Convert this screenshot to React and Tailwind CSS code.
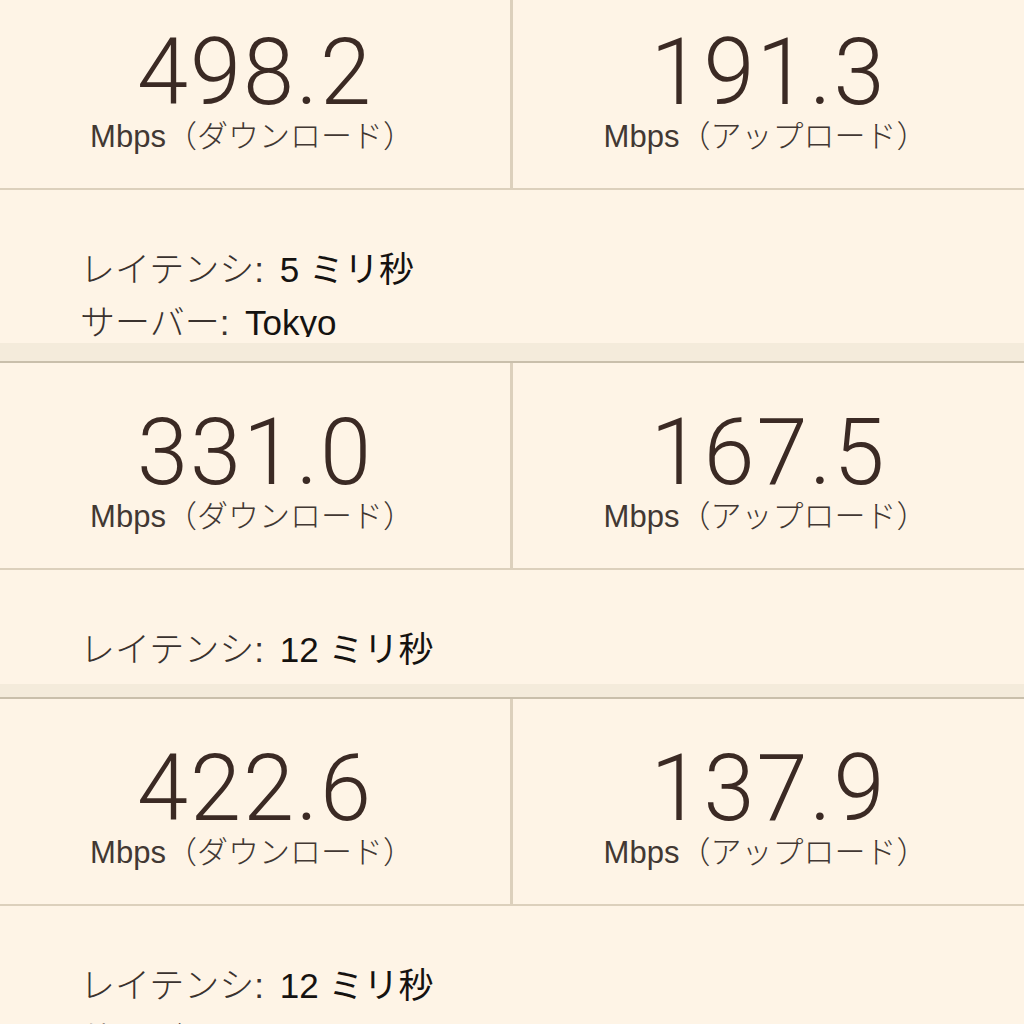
import React from 'react';

const jp = { fontFamily: '"Liberation Sans", "Noto Sans CJK JP", sans-serif' };

const results = [
    {
        down: '498.2',
        up: '191.3',
        lines: [['レイテンシ:', '5 ミリ秒'], ['サーバー:', 'Tokyo']],
        infoH: 'h-[153px]',
        bandH: 'h-[18px]',
        first: true,
    },
    {
        down: '331.0',
        up: '167.5',
        lines: [['レイテンシ:', '12 ミリ秒']],
        infoH: 'h-[114px]',
        bandH: 'h-[13px]',
    },
    {
        down: '422.6',
        up: '137.9',
        lines: [['レイテンシ:', '12 ミリ秒'], ['サーバー:', 'Tokyo']],
        infoH: 'h-[153px]',
        bandH: 'h-[18px]',
    },
];

const SpeedCell = ({ value, label }) => (
    <div className="flex-1 flex flex-col items-center pt-[45px]">
        <div
            className="text-[92px] leading-[90px] h-[90px] font-light tracking-[2px] text-[#3b2a24]"
            style={{ fontFamily: 'Roboto, "Liberation Sans", sans-serif' }}
        >
            {value}
        </div>
        <div className="mt-[3px] -ml-[6px] text-[31px] leading-[31px] h-[31px] text-[#423833] whitespace-nowrap" style={jp}>
            Mbps<span className="font-light">（{label}）</span>
        </div>
    </div>
);

const ResultCard = ({ item }) => (
    <div className={item.first ? '-mt-[17px]' : ''}>
        {/* Download / upload */}
        <div className="flex h-[207px] border-b-2 border-[#dcd0bc]">
            <div className="w-[510px] flex">
                <SpeedCell value={item.down} label="ダウンロード" />
            </div>
            <div className="w-[3px] bg-[#dcd0bc]" />
            <div className="flex-1 flex">
                <SpeedCell value={item.up} label="アップロード" />
            </div>
        </div>

        {/* Details */}
        <div className={`${item.infoH} overflow-hidden`}>
            <div className="h-[147px] overflow-hidden pl-[80px] pt-[52px] text-[35px]" style={jp}>
                {item.lines.map(([label, value], i) => (
                    <div key={label} className={`${i === 0 ? 'h-[53px]' : 'h-[55px]'} leading-[55px] whitespace-nowrap`}>
                        <span className="font-light text-[#3a322e]">{label}</span>{' '}
                        <span className="ml-[6px] text-[#151210]">{value}</span>
                    </div>
                ))}
            </div>
        </div>
        <div className={`${item.bandH} bg-[#f4ebdb]`} />
        <div className="h-[2px] bg-[#c9bfab]" />
    </div>
);

export default function App() {
    return (
        <div className="w-[1024px] h-[1024px] overflow-hidden bg-[#fef4e6]">
            {results.map((item, i) => (
                <ResultCard key={i} item={item} />
            ))}
        </div>
    );
}
